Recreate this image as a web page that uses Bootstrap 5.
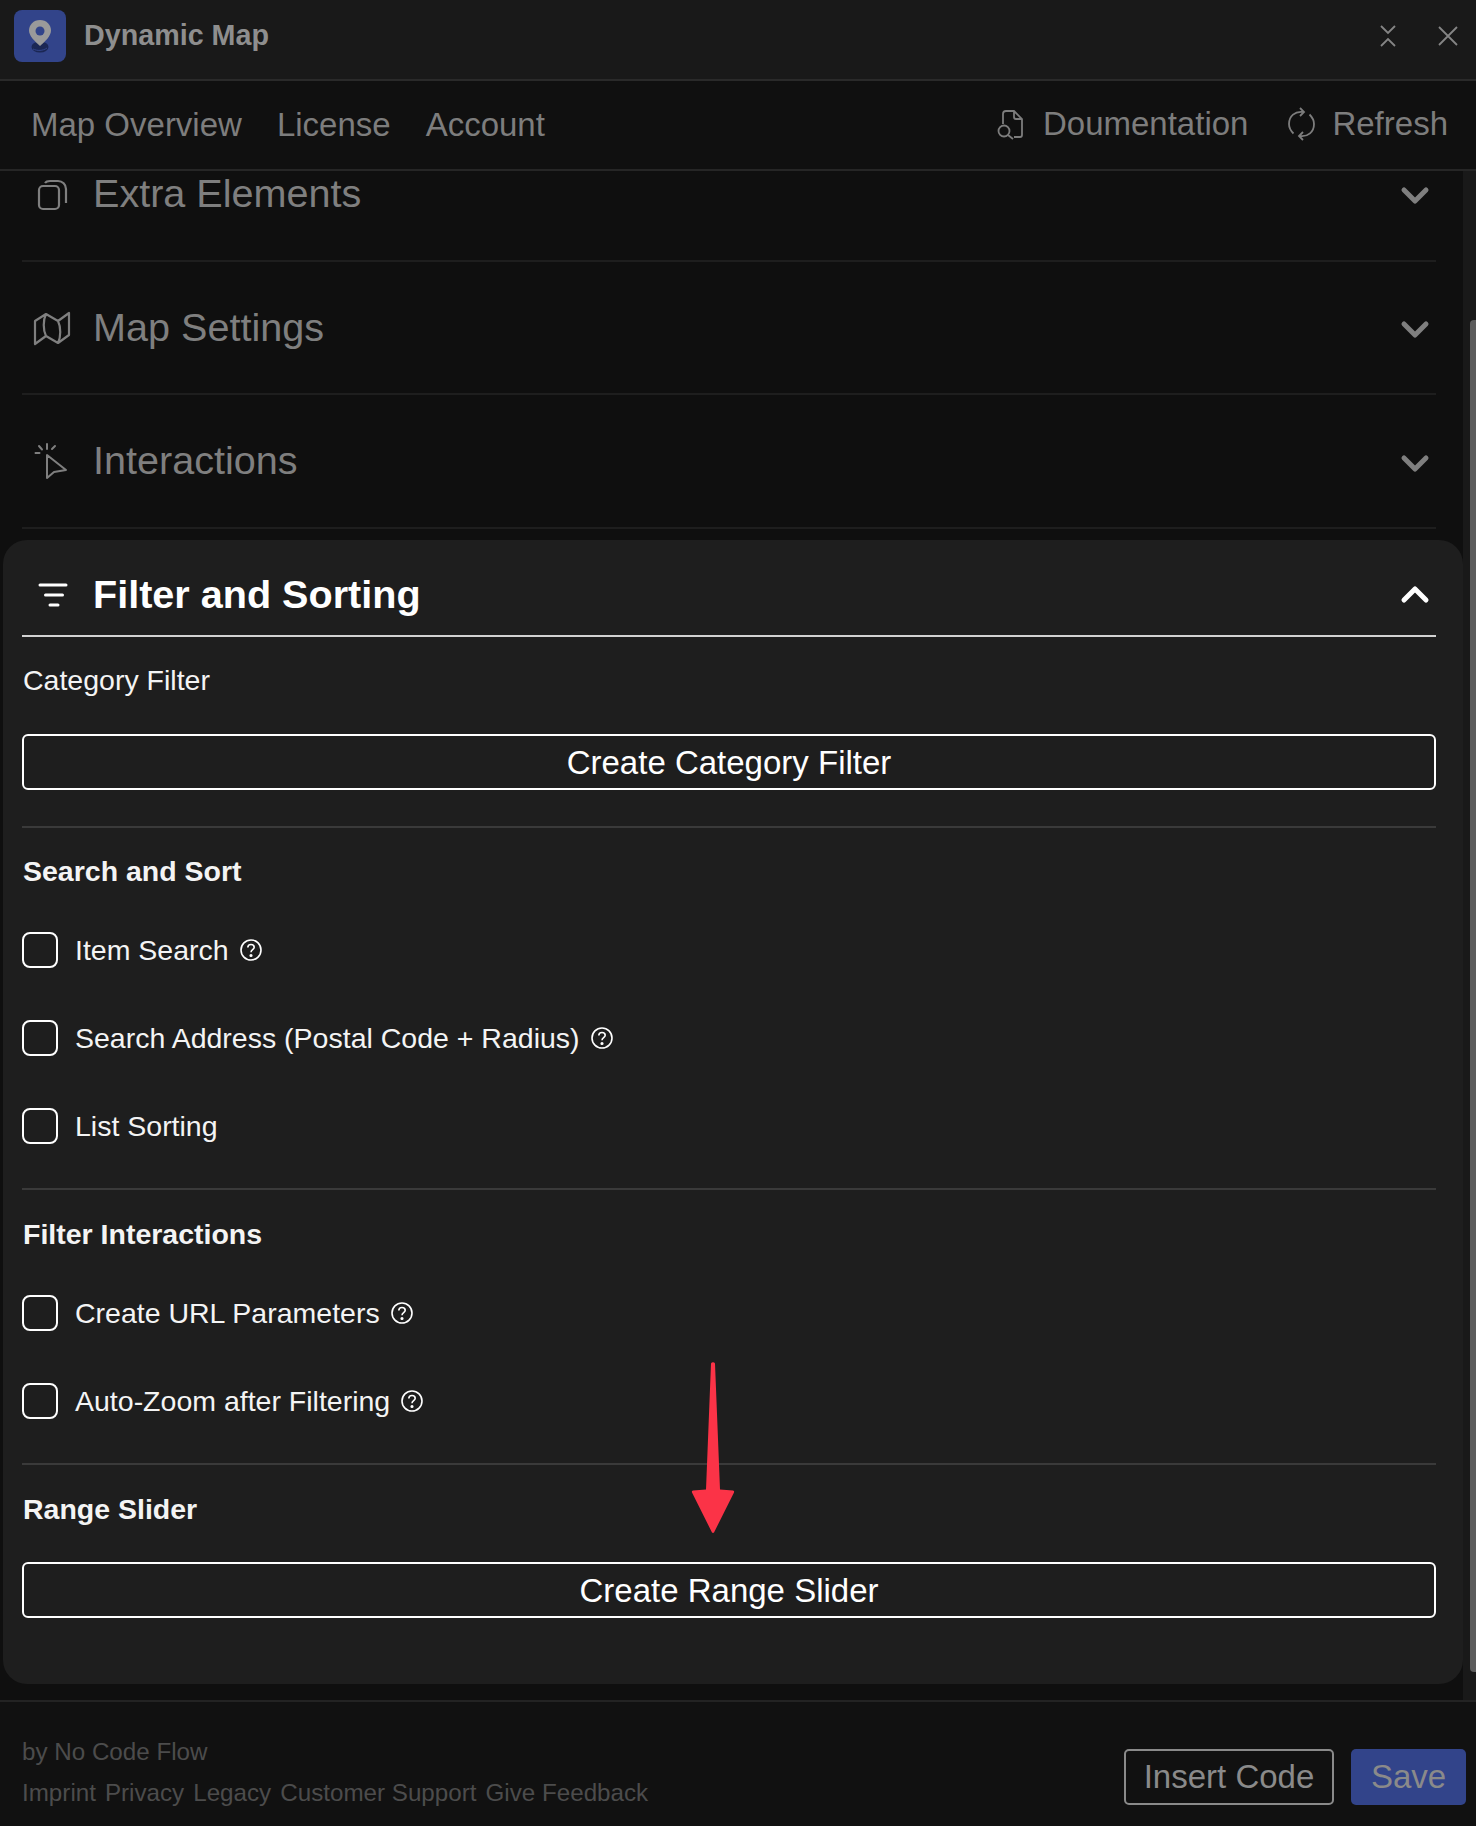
<!DOCTYPE html>
<html lang="en">
<head>
    <meta charset="UTF-8">
    <title>Dynamic Map</title>
    <link rel="stylesheet" href="https://cdn.jsdelivr.net/npm/bootstrap@5.3.0/dist/css/bootstrap.min.css">
    <style>
        html, body { height: 100%; background: #101010; }
        body { font-family: "Liberation Sans", Arial, sans-serif; overflow: hidden; }
        .shell { height: 1826px; position: relative; }
        .title-bar { height: 81px; background: #191919; border-bottom: 2px solid #2a2a2a; padding: 0 18px 7px 14px; }
        .app-logo { width: 52px; height: 52px; border-radius: 8px; background: #32448a; }
        .app-name { font-size: 28.7px; font-weight: 700; color: #8e8e8e; margin-left: 18px; }
        .win-btn { color: #858585; }
        .top-nav { height: 90px; background: #101010; border-bottom: 2px solid #262626; padding: 0 28px 0 31px; }
        .top-link { font-size: 33px; color: #7d7d7d; }
        .top-right { margin-bottom: 2px; }
        .scroll-area { min-height: 0; background: #0f0f0f; }
        .scroll-body { width: 1463px; padding: 0 0 0 3px; }
        .scroll-track { width: 13px; background: #191919; }
        .scroll-thumb { margin-top: 149px; height: 1352px; background: #5c5c5c; border-radius: 4px 0 0 4px; width: 6px; margin-left: 7px; }
        .sec-row { height: 133px; margin: 0 27px 0 19px; padding: 0 6px 0 10px; border-bottom: 2px solid #1e1e1e; font-size: 39.6px; color: #7f7f7f; }
        .sec-row.first-row { height: 91px; padding-bottom: 44px; }
        .sec-row.tall-row { height: 134px; }
        .sec-row svg.sec-icon { width: 40px; height: 40px; margin-right: 21px; flex: none; }
        .sec-chev { margin-top: 4px; }
        .tall-row .sec-chev { margin-top: 6px; }
        .panel-open { background: #1e1e1e; border-radius: 24px; margin-top: 11px; height: 1144px; padding: 0 27px 0 19px; color: #f4f4f4; }
        .panel-head { height: 97px; padding: 14px 6px 0 10px; border-bottom: 2px solid #d2d2d2; font-size: 39.6px; font-weight: 700; color: #fff; }
        .panel-head svg.sec-icon { width: 40px; height: 40px; margin-right: 21px; }
        .panel-chev { margin-top: -2px; }
        .sub-label { font-size: 28.5px; line-height: 32px; margin-left: 1px; }
        .sub-title { font-size: 28.5px; line-height: 32px; font-weight: 700; margin-left: 1px; }
        .wide-btn { height: 56px; font-size: 33px; line-height: 1; border: 2px solid #fff; border-radius: 6px; color: #fff; background: transparent; padding: 0; }
        .thin-rule { height: 2px; background: #3a3a3a; }
        .chk-row { height: 88px; font-size: 28.5px; }
        .chk-row .form-check-input { width: 36px; height: 36px; margin: 0 17px 0 0; background-color: transparent; border: 2px solid #fff; border-radius: 8px; flex: none; }
        .help-ico { width: 24px; height: 24px; margin-left: 10px; }
        .foot-bar { height: 126px; background: #111; border-top: 2px solid #232323; padding: 0 10px 0 22px; }
        .foot-text { font-size: 24.2px; line-height: 41px; color: #4c4c4c; margin-top: 16px; }
        .foot-links { gap: 9px; }
        .btn-insert { height: 56px; width: 210px; padding: 0; font-size: 33px; color: #8a8a8a; border: 2px solid #8a8a8a; border-radius: 5px; background: transparent; }
        .btn-save { height: 56px; width: 115px; padding: 0; font-size: 33px; color: #8a8a8a; background: #32448a; border: 0; border-radius: 5px; margin-left: 17px; }
        .red-arrow { position: absolute; left: 688px; top: 1360px; width: 50px; height: 177px; }
    </style>
</head>
<body>
    <div class="shell d-flex flex-column">
        <!-- title bar -->
        <div class="title-bar d-flex align-items-center flex-shrink-0">
            <div class="app-logo">
                <svg width="52" height="52" viewBox="0 0 52 52">
                    <ellipse cx="26" cy="37" rx="8.500" ry="5.500" fill="#1b2754"/>
                    <path d="M19 39c4 2 10 2 14-1" fill="none" stroke="#32448a" stroke-width="1"/>
                    <path d="M26 10c-6.500 0-11 5-11 10.500 0 5.500 6 11 11 15.500 5-4.500 11-10 11-15.500C37 15 32.500 10 26 10z" fill="#9a9a9a"/>
                    <circle cx="26" cy="21" r="4.500" fill="#32448a"/>
                </svg>
            </div>
            <div class="app-name">Dynamic Map</div>
            <div class="ms-auto d-flex align-items-center win-btn" style="gap:42px">
                <svg width="16" height="22" viewBox="0 0 16 22" fill="none" stroke="currentColor" stroke-width="1.800"><path d="M1 1l7 7 7-7M1 21l7-7 7 7"/></svg>
                <svg width="20" height="20" viewBox="0 0 20 20" fill="none" stroke="currentColor" stroke-width="1.800"><path d="M1 1l18 18M19 1L1 19"/></svg>
            </div>
        </div>

        <!-- nav -->
        <div class="top-nav d-flex align-items-center flex-shrink-0">
            <div class="d-flex top-link" style="gap:35px">
                <span>Map Overview</span><span>License</span><span>Account</span>
            </div>
            <div class="ms-auto d-flex align-items-center top-link top-right">
                <svg style="margin-right:18px" width="28" height="33" viewBox="0 0 28 33" fill="none" stroke="currentColor" stroke-width="1.800"><path d="M6 16V6a3 3 0 0 1 3-3h8l8 8v16a2 2 0 0 1-2 2h-6M17 3v6a2 2 0 0 0 2 2h6"/><circle cx="7" cy="23" r="5.500"/><path d="M11 27l5 4"/></svg>
                <span>Doumentation</span>
                <svg style="margin:0 17px 0 40px" width="27" height="34" viewBox="0 0 27 34" fill="none" stroke="currentColor" stroke-width="1.800"><path d="M15 5C7 4 1 9 1 17c0 4 2 7 4.500 9.500M12 29c8 1 14-4 14-12 0-4-2-7-4.500-9.500M12 1l4 4-4 4M15 25l-4 4 4 4"/></svg>
                <span>Refresh</span>
            </div>
        </div>

        <!-- scrolling content -->
        <div class="scroll-area flex-grow-1 d-flex">
            <div class="scroll-body">
                <div class="sec-row first-row d-flex align-items-center">
                    <svg class="sec-icon" viewBox="0 0 40 40" fill="none" stroke="currentColor" stroke-width="2.200"><rect x="7" y="12" width="20" height="23" rx="4"/><path d="M13 9c1-1.500 3-2 5-2h8a8 8 0 0 1 8 8v14"/></svg>
                    <span>Extra Elements</span>
                    <svg class="ms-auto sec-chev" width="30" height="20" viewBox="0 0 30 20" fill="none" stroke="currentColor" stroke-width="5" stroke-linecap="round" stroke-linejoin="round"><path d="M4 4l11 11L26 4"/></svg>
                </div>
                <div class="sec-row d-flex align-items-center">
                    <svg class="sec-icon" viewBox="0 0 40 40" fill="none" stroke="currentColor" stroke-width="2.200" stroke-linejoin="round"><path d="M3 13l11-7 12 7 11-8v22l-11 8-12-7-11 8zM14 6c-3 6-3 16 0 22M26 13c3 6 3 16 0 22"/></svg>
                    <span>Map Settings</span>
                    <svg class="ms-auto sec-chev" width="30" height="20" viewBox="0 0 30 20" fill="none" stroke="currentColor" stroke-width="5" stroke-linecap="round" stroke-linejoin="round"><path d="M4 4l11 11L26 4"/></svg>
                </div>
                <div class="sec-row tall-row d-flex align-items-center">
                    <svg class="sec-icon" viewBox="0 0 40 40" fill="none" stroke="currentColor" stroke-width="2" stroke-linecap="round" stroke-linejoin="round"><path d="M15 14v23l7-6 12-2zM3.500 12h4M7 5l3 3.500M15 3v5M23 5l-3 3"/></svg>
                    <span>Interactions</span>
                    <svg class="ms-auto sec-chev" width="30" height="20" viewBox="0 0 30 20" fill="none" stroke="currentColor" stroke-width="5" stroke-linecap="round" stroke-linejoin="round"><path d="M4 4l11 11L26 4"/></svg>
                </div>

                <div class="panel-open">
                    <div class="panel-head d-flex align-items-center">
                        <svg class="sec-icon" viewBox="0 0 40 40" fill="none" stroke="#fff" stroke-width="3" stroke-linecap="round"><path d="M8 10h26M13.500 20h17M18 30h8"/></svg>
                        <span>Filter and Sorting</span>
                        <svg class="ms-auto panel-chev" width="30" height="20" viewBox="0 0 30 20" fill="none" stroke="#fff" stroke-width="5" stroke-linecap="round" stroke-linejoin="round"><path d="M4 16L15 5l11 11"/></svg>
                    </div>
                    <div class="sub-label" style="margin-top:27px">Category Filter</div>
                    <button class="btn wide-btn w-100" style="margin-top:38px">Create Category Filter</button>
                    <div class="thin-rule" style="margin-top:36px"></div>
                    <div class="sub-title" style="margin-top:27px">Search and Sort</div>
                    <div style="margin-top:19px">
                        <div class="chk-row d-flex align-items-center"><input class="form-check-input" type="checkbox"><span>Item Search</span><svg class="help-ico" viewBox="0 0 24 24" fill="none" stroke="#fff" stroke-width="1.600"><circle cx="12" cy="12" r="10"/><path d="M8.800 9.500c0-2 1.500-3 3.200-3s3.200 1 3.200 2.800c0 2.400-3.200 2.400-3.200 5"/><circle cx="12" cy="17.500" r=".8" fill="#fff"/></svg></div>
                        <div class="chk-row d-flex align-items-center"><input class="form-check-input" type="checkbox"><span>Search Address (Postal Code + Radius)</span><svg class="help-ico" viewBox="0 0 24 24" fill="none" stroke="#fff" stroke-width="1.600"><circle cx="12" cy="12" r="10"/><path d="M8.800 9.500c0-2 1.500-3 3.200-3s3.200 1 3.200 2.800c0 2.400-3.200 2.400-3.200 5"/><circle cx="12" cy="17.500" r=".8" fill="#fff"/></svg></div>
                        <div class="chk-row d-flex align-items-center"><input class="form-check-input" type="checkbox"><span>List Sorting</span></div>
                    </div>
                    <div class="thin-rule" style="margin-top:18px"></div>
                    <div class="sub-title" style="margin-top:28px">Filter Interactions</div>
                    <div style="margin-top:19px">
                        <div class="chk-row d-flex align-items-center"><input class="form-check-input" type="checkbox"><span>Create URL Parameters</span><svg class="help-ico" viewBox="0 0 24 24" fill="none" stroke="#fff" stroke-width="1.600"><circle cx="12" cy="12" r="10"/><path d="M8.800 9.500c0-2 1.500-3 3.200-3s3.200 1 3.200 2.800c0 2.400-3.200 2.400-3.200 5"/><circle cx="12" cy="17.500" r=".8" fill="#fff"/></svg></div>
                        <div class="chk-row d-flex align-items-center"><input class="form-check-input" type="checkbox"><span>Auto-Zoom after Filtering</span><svg class="help-ico" viewBox="0 0 24 24" fill="none" stroke="#fff" stroke-width="1.600"><circle cx="12" cy="12" r="10"/><path d="M8.800 9.500c0-2 1.500-3 3.200-3s3.200 1 3.200 2.800c0 2.400-3.200 2.400-3.200 5"/><circle cx="12" cy="17.500" r=".8" fill="#fff"/></svg></div>
                    </div>
                    <div class="thin-rule" style="margin-top:18px"></div>
                    <div class="sub-title" style="margin-top:28px">Range Slider</div>
                    <button class="btn wide-btn w-100" style="margin-top:37px">Create Range Slider</button>
                </div>
            </div>
            <div class="scroll-track"><div class="scroll-thumb"></div></div>
        </div>

        <!-- footer -->
        <div class="foot-bar d-flex align-items-center flex-shrink-0">
            <div class="foot-text">
                <div>by No Code Flow</div>
                <div class="d-flex foot-links"><span>Imprint</span><span>Privacy</span><span>Legacy</span><span>Customer Support</span><span>Give Feedback</span></div>
            </div>
            <div class="ms-auto d-flex" style="margin-top:25px">
                <button class="btn btn-insert">Insert Code</button>
                <button class="btn btn-save">Save</button>
            </div>
        </div>

        <!-- annotation arrow -->
        <svg class="red-arrow" viewBox="0 0 50 176"><path d="M23 3a2.200 2.200 0 0 1 4 0l5 126 13 1a1.500 1.500 0 0 1 1 2L26 172a1.500 1.500 0 0 1-2 0L4 132a1.500 1.500 0 0 1 1-2l13-1z" fill="#fb3347"/></svg>
    </div>
    <script src="https://cdn.jsdelivr.net/npm/bootstrap@5.3.0/dist/js/bootstrap.bundle.min.js"></script>
</body>
</html>
